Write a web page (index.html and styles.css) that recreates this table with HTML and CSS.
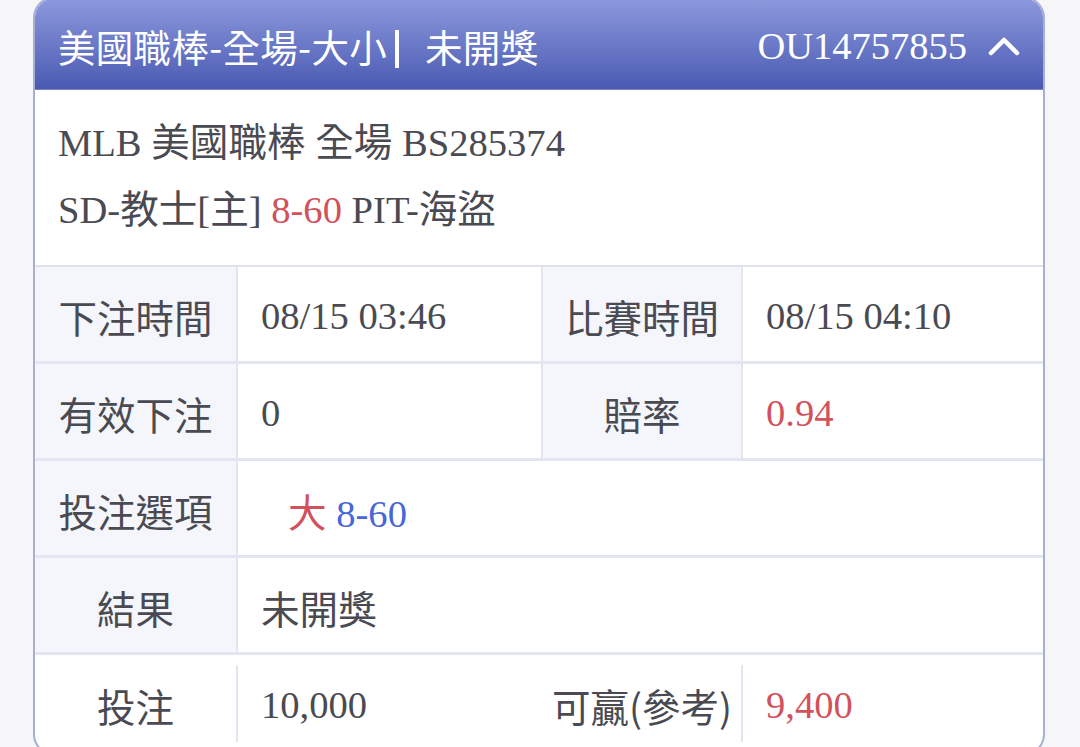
FILE: index.html
```html
<!DOCTYPE html>
<html lang="zh-Hant">
<head>
<meta charset="utf-8">
<link rel="stylesheet" href="styles.css">
</head>
<body>
<div class="card">
  <div class="head">
    <div class="title"><span>美國職棒-全場-大小<span class="bar"></span>未開獎</span></div>
    <div class="code">OU14757855
      <svg class="chev" width="34" height="24" viewBox="0 0 34 24"><path d="M4 20 L17 7 L30 20" fill="none" stroke="#fff" stroke-width="4.5" stroke-linecap="round" stroke-linejoin="round"/></svg>
    </div>
  </div>
  <div class="info">
    <div>MLB 美國職棒 全場 BS285374</div>
    <div>SD-教士[主] <span class="red">8-60</span> PIT-海盜</div>
  </div>
  <div class="grid">
    <div class="lab">下注時間</div>
    <div class="val">08/15 03:46</div>
    <div class="lab">比賽時間</div>
    <div class="val">08/15 04:10</div>

    <div class="lab">有效下注</div>
    <div class="val">0</div>
    <div class="lab">賠率</div>
    <div class="val red">0.94</div>

    <div class="lab">投注選項</div>
    <div class="val wide pick"><span><span class="red cjk">大</span> <span class="blue">8-60</span></span></div>

    <div class="lab">結果</div>
    <div class="val wide">未開獎</div>
  </div>
  <div class="foot">
    <div class="flab">投注</div>
    <div class="fval">10,000</div>
    <div class="flab right">可贏(參考)</div>
    <div class="fval red">9,400</div>
  </div>
</div>
</body>
</html>
```
FILE: styles.css
```css
html, body {
  margin: 0;
  padding: 0;
  background: #f6f6f8;
  height: 747px;
  overflow: hidden;
}
body {
  font-family: "Liberation Serif", "Noto Sans CJK TC", serif;
  color: #4a4a52;
  font-size: 38px;
}
.card {
  margin: -4px 35px 0 33px;
  border: 2px solid #a9aed3;
  border-radius: 22px;
  background: #fff;
  overflow: hidden;
  height: 760px;
  box-sizing: border-box;
}
.head {
  height: 92px;
  box-sizing: border-box;
  background: linear-gradient(#8d9ade, #4a5ab1);
  border-bottom: 1px solid #7b82bf;
  display: flex;
  align-items: center;
  justify-content: space-between;
  padding: 4px 22px 0 23px;
  color: #fff;
}
.title {
  font-family: "Noto Sans CJK TC", sans-serif;
  font-size: 37.5px;
  white-space: pre;
  letter-spacing: 0.3px;
}
.bar {
  display: inline-block;
  width: 4px;
  height: 38px;
  background: #fff;
  margin: 0 26px 0 8px;
  vertical-align: -6px;
}
.code {
  font-size: 38.5px;
  display: flex;
  align-items: center;
  gap: 20px;
}
.chev { display: block; margin-top: -2px; }
.info {
  padding: 20px 23px 21px 23px;
  line-height: 67px;
  font-size: 38.6px;
  border-bottom: 2px solid #dfe1ef;
}
.red { color: #d2515c; }
.blue { color: #4867d6; }
.grid {
  display: grid;
  grid-template-columns: 203px 305px 200px 1fr;
  grid-auto-rows: 97px;
}
.lab, .val {
  display: flex;
  align-items: center;
  border-bottom: 3px solid #e3e5f1;
  box-sizing: border-box;
  padding-top: 3px;
}
.lab {
  justify-content: center;
  background: #f4f6fb;
  border-right: 2px solid #e3e5f1;
  font-family: "Noto Sans CJK TC", sans-serif;
  font-size: 38.5px;
}
.val {
  padding-left: 23px;
  border-right: 2px solid #e3e5f1;
  font-size: 38.6px;
}
.val:nth-child(4n) { border-right: none; }
.wide { grid-column: span 3; border-right: none; }
.pick { padding-left: 50px; white-space: pre; }
.foot {
  display: grid;
  grid-template-columns: 203px 305px 200px 1fr;
  padding: 10px 0 8px;
  height: 95px;
  box-sizing: border-box;
}
.flab, .fval {
  display: flex;
  align-items: center;
  padding-top: 2px;
}
.flab {
  justify-content: center;
  font-family: "Noto Sans CJK TC", sans-serif;
  font-size: 38.5px;
  border-right: 2px solid #e3e5f1;
}
.flab.right { justify-content: flex-end; padding-right: 9px; }
.fval {
  padding-left: 23px;
  font-size: 38.6px;
}
```
